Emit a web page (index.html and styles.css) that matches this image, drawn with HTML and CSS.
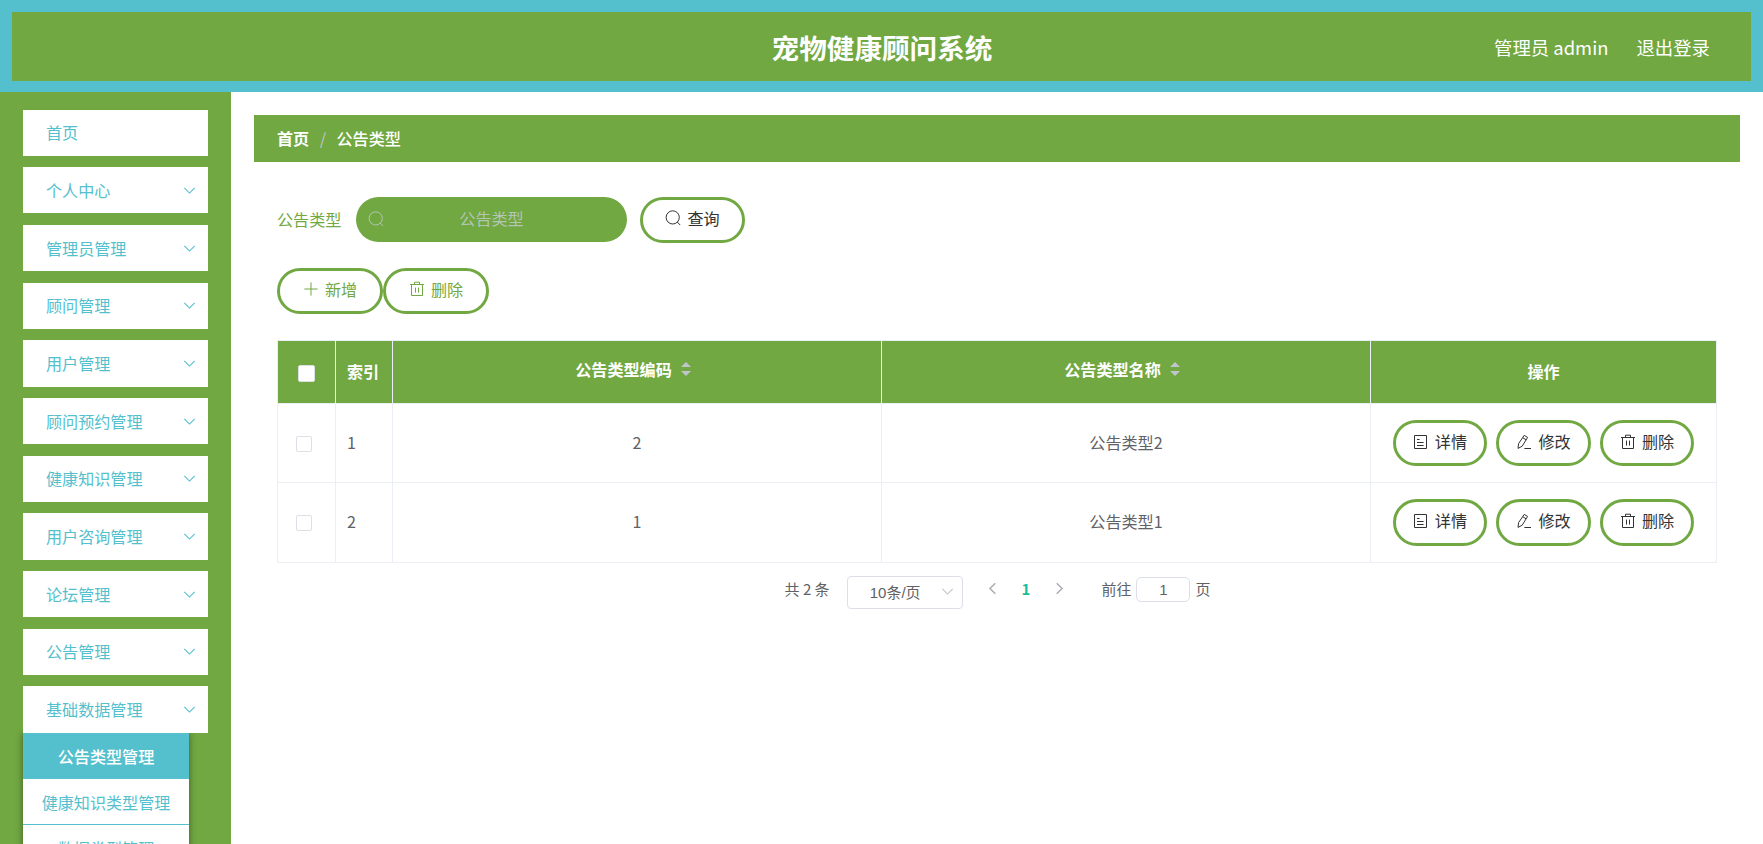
FILE: index.html
```html
<!DOCTYPE html>
<html lang="zh-CN">
<head>
  <meta charset="UTF-8" />
  <meta name="viewport" content="width=device-width, initial-scale=1.0" />
  <title>宠物健康顾问系统</title>
  <link rel="stylesheet" href="styles.css">
</head>
<body>
  <!-- icons -->
  <svg class="sprite" width="0" height="0">
    <symbol id="i-down" viewBox="0 0 12 12"><path d="M1.2 3.6 6 8.4l4.8-4.8" /></symbol>
    <symbol id="i-left" viewBox="0 0 12 12"><path d="M8.6 1.2 3.6 6l5 4.8" /></symbol>
    <symbol id="i-right" viewBox="0 0 12 12"><path d="M3.4 1.2 8.4 6l-5 4.8" /></symbol>
    <symbol id="i-search" viewBox="0 0 16 16"><circle cx="7.7" cy="7.4" r="6.6" /><path d="M12.2 12 15.2 15" /></symbol>
    <symbol id="i-plus" viewBox="0 0 16 16"><path d="M8 1.4v13.2M1.4 8h13.2" /></symbol>
    <symbol id="i-delete" viewBox="0 0 16 16"><path d="M1 3.5h14M5.5 3.4V1.2h5v2.2M2.5 3.8v10.7h11V3.8M6.5 6.6v5M9.5 6.6v5" /></symbol>
    <symbol id="i-doc" viewBox="0 0 16 16"><path d="M1.5 1.5h12v13h-12zM4 5.5h2.6M4 8.5h6.6M4 11.5h6.6" /></symbol>
    <symbol id="i-edit" viewBox="0 0 16 16"><path d="M8.2 1.4 11.6 3.4 6.2 12.2 2 14.4l.6-4.8zM6.8 3.8l3.4 2M8.4 14.5H15" /></symbol>
  </svg>

  <header>
    <h1>宠物健康顾问系统</h1>
    <div class="user">
      <span>管理员 admin</span>
      <a>退出登录</a>
    </div>
  </header>

  <div class="wrap">
    <aside>
      <ul class="menu">
        <li>首页</li>
        <li>个人中心<svg><use href="#i-down" /></svg></li>
        <li>管理员管理<svg><use href="#i-down" /></svg></li>
        <li>顾问管理<svg><use href="#i-down" /></svg></li>
        <li>用户管理<svg><use href="#i-down" /></svg></li>
        <li>顾问预约管理<svg><use href="#i-down" /></svg></li>
        <li>健康知识管理<svg><use href="#i-down" /></svg></li>
        <li>用户咨询管理<svg><use href="#i-down" /></svg></li>
        <li>论坛管理<svg><use href="#i-down" /></svg></li>
        <li>公告管理<svg><use href="#i-down" /></svg></li>
        <li>基础数据管理<svg><use href="#i-down" /></svg></li>
      </ul>
      <ul class="submenu">
        <li class="active">公告类型管理</li>
        <li>健康知识类型管理</li>
        <li>数据类型管理</li>
      </ul>
    </aside>

    <main>
      <div class="breadcrumb"><b>首页</b><i>/</i><span>公告类型</span></div>

      <div class="content">
        <div class="search">
          <label>公告类型</label>
          <div class="input"><svg><use href="#i-search" /></svg><span>公告类型</span></div>
          <button class="btn dark"><svg><use href="#i-search" /></svg>查询</button>
        </div>

        <div class="tools">
          <button class="btn"><svg><use href="#i-plus" /></svg>新增</button>
          <button class="btn"><svg><use href="#i-delete" /></svg>删除</button>
        </div>

        <table>
          <colgroup>
            <col class="c-check"><col class="c-index"><col class="c-data"><col class="c-data"><col>
          </colgroup>
          <thead>
            <tr>
              <th><span class="check"></span></th>
              <th class="left">索引</th>
              <th><div class="sortable">公告类型编码<span class="sort"></span></div></th>
              <th><div class="sortable">公告类型名称<span class="sort"></span></div></th>
              <th>操作</th>
            </tr>
          </thead>
          <tbody>
            <tr>
              <td><span class="check"></span></td>
              <td class="left">1</td>
              <td>2</td>
              <td>公告类型2</td>
              <td>
                <div class="actions">
                  <button class="btn dark"><svg><use href="#i-doc" /></svg>详情</button>
                  <button class="btn dark"><svg><use href="#i-edit" /></svg>修改</button>
                  <button class="btn dark"><svg><use href="#i-delete" /></svg>删除</button>
                </div>
              </td>
            </tr>
            <tr>
              <td><span class="check"></span></td>
              <td class="left">2</td>
              <td>1</td>
              <td>公告类型1</td>
              <td>
                <div class="actions">
                  <button class="btn dark"><svg><use href="#i-doc" /></svg>详情</button>
                  <button class="btn dark"><svg><use href="#i-edit" /></svg>修改</button>
                  <button class="btn dark"><svg><use href="#i-delete" /></svg>删除</button>
                </div>
              </td>
            </tr>
          </tbody>
        </table>

        <div class="pagination">
          <span class="total">共 2 条</span>
          <div class="select"><span>10条/页</span><svg><use href="#i-down" /></svg></div>
          <svg class="arrow"><use href="#i-left" /></svg>
          <b class="page">1</b>
          <svg class="arrow"><use href="#i-right" /></svg>
          <span class="goto">前往</span>
          <div class="jump">1</div>
          <span>页</span>
        </div>
      </div>
    </main>
  </div>
</body>
</html>
```
FILE: styles.css
```css
* {
  margin: 0;
  padding: 0;
  box-sizing: border-box;
}

body {
  height: 844px;
  overflow: hidden;
  background: #fff;
  color: #606266;
  font-family: "Noto Sans CJK SC", sans-serif;
  font-size: 16.1px;
}

ul {
  list-style: none;
}

svg {
  flex: none;
  fill: none;
  stroke: currentColor;
  stroke-width: 1;
}

.sprite {
  position: absolute;
}

header {
  display: grid;
  grid-template-columns: 1fr auto 1fr;
  align-items: center;
  height: 92px;
  padding: 0 41px 0 42px;
  border: 12px solid #54bfcd;
  border-bottom-width: 11px;
  background: #71a842;
  color: #fff;
}

h1 {
  grid-column: 2;
  font-size: 27.6px;
  line-height: 40px;
}

.user {
  display: flex;
  justify-content: flex-end;
  gap: 28px;
  font-size: 18.4px;
  line-height: 28px;
}

.wrap {
  display: flex;
  height: 752px;
}

aside {
  width: 231px;
  flex: none;
  padding: 17.6px 23px 0;
  background: #71a842;
  color: #54bfcd;
}

.menu {
  display: flex;
  flex-direction: column;
  gap: 11.5px;
}

.menu li {
  display: flex;
  align-items: center;
  justify-content: space-between;
  height: 46.2px;
  padding: 0 12px 1px 23px;
  background: #fff;
}

.menu svg {
  width: 13px;
  height: 13px;
  margin-top: 1px;
}

.submenu {
  width: 166px;
  box-shadow: 0 0 7px rgba(0, 0, 0, 0.45);
}

.submenu li {
  height: 46px;
  border-bottom: 1px solid #54bfcd;
  background: #fff;
  line-height: 46px;
  text-align: center;
}

.submenu .active {
  background: #54bfcd;
  color: #fff;
  font-weight: 500;
}

main {
  flex: 1;
  padding: 23px;
}

.breadcrumb {
  display: flex;
  align-items: center;
  height: 47px;
  padding: 0 0 2px 23px;
  background: #71a842;
  color: #fff;
}

.breadcrumb span {
  font-weight: 500;
}

.breadcrumb i {
  margin: 0 10.5px;
  color: #c0c4cc;
  font-style: normal;
}

.content {
  padding: 34.5px 23px 0;
}

.search,
.tools {
  display: flex;
  align-items: center;
}

.search label {
  width: 79px;
  padding-bottom: 1px;
  color: #71a842;
}

.input {
  display: flex;
  align-items: center;
  width: 271px;
  height: 45px;
  margin-right: 13px;
  padding: 0 12px 2px;
  border-radius: 23px;
  background: #71a842;
  color: #b5c5b5;
}

.input svg {
  width: 16px;
  height: 16px;
}

.input span {
  flex: 1;
  padding: 0 16px 1px 0;
  text-align: center;
}

.btn {
  display: flex;
  align-items: center;
  justify-content: center;
  gap: 6px;
  width: 106px;
  height: 46.5px;
  padding-bottom: 4px;
  border: 3px solid #71a842;
  border-radius: 24px;
  background: #fff;
  color: #71a842;
  font: inherit;
}

.search .btn {
  width: 105px;
}

.btn svg {
  width: 16px;
  height: 16px;
  margin-top: 1px;
}

.dark {
  color: #333;
}

.tools {
  margin: 24.5px 0 26px;
}

table {
  width: 1440px;
  border-collapse: collapse;
  table-layout: fixed;
}

.c-check,
.c-index {
  width: 57.5px;
}

.c-data {
  width: 489px;
}

th {
  height: 63px;
  padding-bottom: 2px;
  border: 1px solid #ebeef5;
  background: #71a842;
  color: #fff;
}

td {
  height: 79.3px;
  border: 1px solid #ebeef5;
  text-align: center;
}

td:not(:last-child) {
  padding-bottom: 2px;
}

.left {
  padding-left: 11.5px;
  text-align: left;
}

.check {
  display: inline-block;
  width: 16px;
  height: 16px;
  margin: 0 5px 2px 0;
  border: 1px solid #dcdfe6;
  border-radius: 2px;
  background: #fff;
  vertical-align: middle;
}

th .check {
  width: 17px;
  height: 17px;
  margin: 0 0 0 1px;
}

.sortable {
  display: flex;
  align-items: center;
  justify-content: center;
  gap: 9px;
  padding: 0 8px 4px 0;
}

.sort::before,
.sort::after {
  content: "";
  display: block;
  border: 5.5px solid transparent;
}

.sort::before {
  border-top: 0;
  border-bottom-color: #c0c4cc;
}

.sort::after {
  margin-top: 4px;
  border-bottom: 0;
  border-top-color: #c0c4cc;
}

.actions {
  display: flex;
  justify-content: center;
  gap: 9px;
}

.actions .btn {
  width: 94.6px;
}

.pagination {
  display: flex;
  justify-content: center;
  align-items: center;
  height: 33px;
  margin: 13.5px 0 0 1px;
  font-size: 15px;
}

.pagination > span,
.page {
  padding-bottom: 8px;
}

.total {
  margin-right: 17px;
}

.select {
  display: flex;
  align-items: center;
  justify-content: flex-end;
  width: 116px;
  height: 33px;
  padding: 0 8px 3px 0;
  border: 1px solid #dcdfe6;
  border-radius: 4px;
  font-family: "Liberation Sans", "Noto Sans CJK SC", sans-serif;
}

.select svg {
  width: 13px;
  height: 13px;
  margin-left: 20px;
  color: #c0c4cc;
}

.arrow {
  width: 13px;
  height: 13px;
  margin: 0 23px 8px;
  color: #a8abb2;
  stroke-width: 1.3;
}

.page {
  color: #1abc9c;
}

.goto {
  margin-left: 12px;
}

.jump {
  width: 54px;
  height: 25px;
  margin: 0 5px 7px;
  border: 1px solid #dcdfe6;
  border-radius: 5px;
  font-family: "Liberation Sans", sans-serif;
  line-height: 23px;
  text-align: center;
}
```
